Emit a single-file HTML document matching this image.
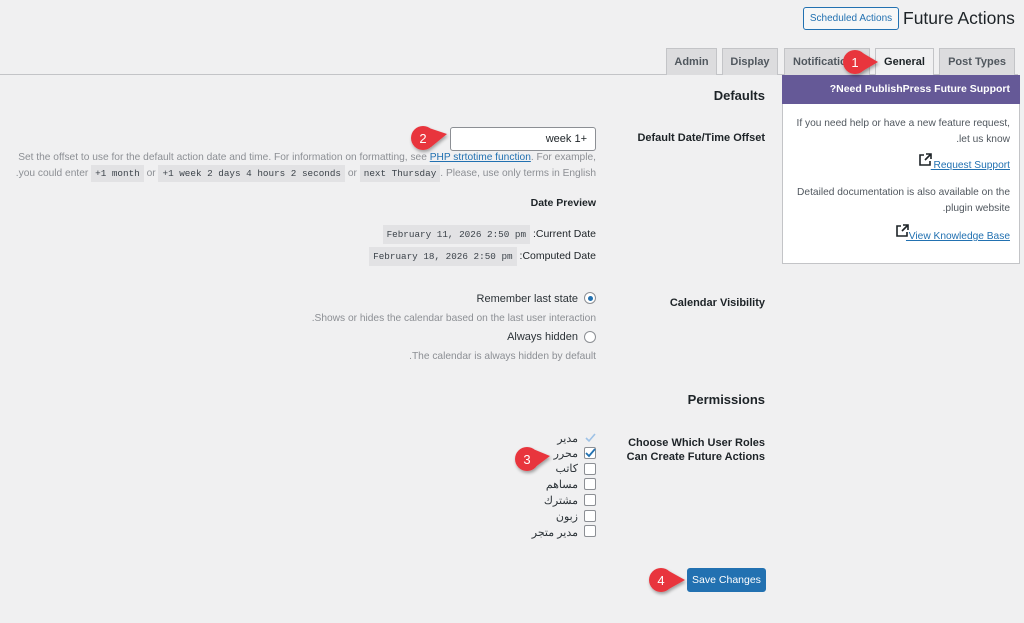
<!DOCTYPE html>
<html><head><meta charset="utf-8"><style>
*{margin:0;padding:0;box-sizing:border-box}
body{width:1024px;height:623px;background:#f0f0f1;font-family:"Liberation Sans","Noto Sans CJK SC",sans-serif;position:relative;overflow:hidden;color:#1d2327}
.a{position:absolute;white-space:nowrap}
.r{text-align:right}
.b{font-weight:bold}
.tab{position:absolute;top:48px;height:27px;background:#dcdcde;border:1px solid #c3c4c7;border-bottom:none;font-size:11px;font-weight:bold;color:#50575e;text-align:center;line-height:26px}
.desc{font-size:10.2px;color:#8c8f94}
code{font-family:"Liberation Mono",monospace;background:#e2e2e4;padding:3px 4px;font-size:9.3px;color:#3c434a}
.cb{position:absolute;left:584px;width:12px;height:12px;border:1px solid #8c8f94;border-radius:2px;background:#fff}
.rl{position:absolute;font-size:11px;color:#2c3338;text-align:right;right:430px}
</style></head><body>
<div class="a" style="left:803px;top:7px;width:96px;height:23px;border:1px solid #2271b1;border-radius:3px;background:#f6f7f7;color:#2271b1;font-size:10px;text-align:center;line-height:21px">Scheduled Actions</div>
<div class="a" style="left:903px;top:8px;font-size:17.5px;color:#1d2327">Future Actions</div>

<div class="a" style="left:0;top:74px;width:1018px;height:1px;background:#c3c4c7"></div>
<div class="tab" style="left:666px;width:51px">Admin</div>
<div class="tab" style="left:722px;width:56px">Display</div>
<div class="tab" style="left:784px;width:86px;text-align:left;padding-left:8px;overflow:hidden">Notifications</div>
<div class="tab" style="left:875px;width:59px;background:#f0f0f1;color:#1d2327;height:28px">General</div>
<div class="tab" style="left:939px;width:76px">Post Types</div>

<div class="a" style="left:782px;top:75px;width:238px;height:189px;background:#fff;border:1px solid #c3c4c7"></div>
<div class="a" style="left:782px;top:75px;width:238px;height:29px;background:#655997;color:#fff;font-size:10.5px;font-weight:bold;text-align:right;padding-right:10px;line-height:29px">?Need PublishPress Future Support</div>
<div class="a r" style="right:14px;top:116px;font-size:10.2px;color:#50575e;line-height:16px">If you need help or have a new feature request,<br>.let us know</div>
<div class="a r" style="right:14px;top:160px;font-size:10.2px;color:#2271b1;text-decoration:underline">&nbsp;Request Support</div>
<svg class="a" style="left:918px;top:153px" width="14" height="14" viewBox="0 0 14 14" fill="none" stroke="#1d2327" stroke-width="1.6"><path d="M6 2H2v10h10V8M8 1h5v5M13 1L7 7"/></svg>
<div class="a r" style="right:14px;top:185px;font-size:10.2px;color:#50575e;line-height:16px">Detailed documentation is also available on the<br>.plugin website</div>
<div class="a r" style="right:14px;top:231px;font-size:10.2px;color:#2271b1;text-decoration:underline">&nbsp;View Knowledge Base</div>
<svg class="a" style="left:895px;top:224px" width="14" height="14" viewBox="0 0 14 14" fill="none" stroke="#1d2327" stroke-width="1.6"><path d="M6 2H2v10h10V8M8 1h5v5M13 1L7 7"/></svg>

<div class="a b r" style="right:259px;top:88px;font-size:13px">Defaults</div>
<div class="a b r" style="right:259px;top:132px;font-size:11px">Default Date/Time Offset</div>
<div class="a" style="left:450px;top:127px;width:146px;height:24px;background:#fff;border:1px solid #8c8f94;border-radius:3px;font-size:11px;text-align:right;padding-right:8px;line-height:22px">week 1+</div>
<div class="a desc r" style="right:428px;top:152px">Set the offset to use for the default action date and time. For information on formatting, see <span style="color:#2271b1;text-decoration:underline">PHP strtotime function</span>. For example,</div>
<div class="a desc r" style="right:428px;top:168px">.you could enter <code>+1 month</code> or <code>+1 week 2 days 4 hours 2 seconds</code> or <code>next Thursday</code>. Please, use only terms in English</div>
<div class="a b r" style="right:428px;top:197px;font-size:10.5px">Date Preview</div>
<div class="a r" style="right:428px;top:228px;font-size:10.5px"><code style="padding:4px 4px">February 11, 2026 2:50 pm</code> :Current Date</div>
<div class="a r" style="right:428px;top:250px;font-size:10.5px"><code style="padding:4px 4px">February 18, 2026 2:50 pm</code> :Computed Date</div>

<div class="a b r" style="right:259px;top:297px;font-size:11px">Calendar Visibility</div>
<div class="a r" style="right:446px;top:293px;font-size:11px;color:#2c3338">Remember last state</div>
<div class="a" style="left:584px;top:292px;width:12px;height:12px;border:1px solid #8c8f94;border-radius:50%;background:#fff"><div style="position:absolute;left:2.5px;top:2.5px;width:5px;height:5px;border-radius:50%;background:#2271b1"></div></div>
<div class="a desc r" style="right:428px;top:313px">.Shows or hides the calendar based on the last user interaction</div>
<div class="a r" style="right:446px;top:331px;font-size:11px;color:#2c3338">Always hidden</div>
<div class="a" style="left:584px;top:331px;width:12px;height:12px;border:1px solid #8c8f94;border-radius:50%;background:#fff"></div>
<div class="a desc r" style="right:428px;top:351px">.The calendar is always hidden by default</div>

<div class="a b r" style="right:259px;top:392px;font-size:13px">Permissions</div>
<div class="a b r" style="right:259px;top:436px;font-size:11px;line-height:14px">Choose Which User Roles<br>Can Create Future Actions</div>

<svg class="a" style="left:585px;top:433px" width="11" height="10" viewBox="0 0 11 10"><path d="M1 5l3 3 6-7" stroke="#9ec2e6" stroke-width="1.6" fill="none"/></svg>
<div class="rl" style="top:432px;right:446px">مدير</div>
<div class="cb" style="top:447px"></div><svg class="a" style="left:585px;top:448px" width="11" height="10" viewBox="0 0 11 10"><path d="M1 5l3 3 6-7" stroke="#2271b1" stroke-width="1.8" fill="none"/></svg>
<div class="rl" style="top:447px;right:446px">محرر</div>
<div class="cb" style="top:463px"></div><div class="rl" style="top:462px;right:446px">كاتب</div>
<div class="cb" style="top:478px"></div><div class="rl" style="top:478px;right:446px">مساهم</div>
<div class="cb" style="top:494px"></div><div class="rl" style="top:494px;right:446px">مشترك</div>
<div class="cb" style="top:510px"></div><div class="rl" style="top:510px;right:446px">زبون</div>
<div class="cb" style="top:525px"></div><div class="rl" style="top:526px;right:446px">مدير متجر</div>

<div class="a" style="left:687px;top:568px;width:79px;height:24px;background:#2271b1;border:1px solid #2271b1;border-radius:3px;color:#fff;font-size:10.5px;text-align:center;line-height:22px">Save Changes</div>

<svg class="a" style="left:0;top:0" width="1024" height="623">
<defs><filter id="s" x="-50%" y="-50%" width="200%" height="200%"><feDropShadow dx="1" dy="2" stdDeviation="1.5" flood-opacity="0.35"/></filter></defs>
<g fill="#e8363d" filter="url(#s)">
<g transform="translate(855,62)"><circle r="12"/><path d="M6 -10 L23 0 L6 10Z"/></g>
<g transform="translate(423,138)"><circle r="12"/><path d="M6 -10 L24 -4 L8 9Z"/></g>
<g transform="translate(527,459)"><circle r="12"/><path d="M6 -10 L23 -3 L7 9Z"/></g>
<g transform="translate(661,580)"><circle r="12"/><path d="M6 -10 L24 0 L6 10Z"/></g>
</g>
<g fill="#fff" font-family="Liberation Sans" font-size="13" text-anchor="middle">
<text x="855" y="67">1</text><text x="423" y="143">2</text><text x="527" y="464">3</text><text x="661" y="585">4</text>
</g>
</svg>
</body></html>
